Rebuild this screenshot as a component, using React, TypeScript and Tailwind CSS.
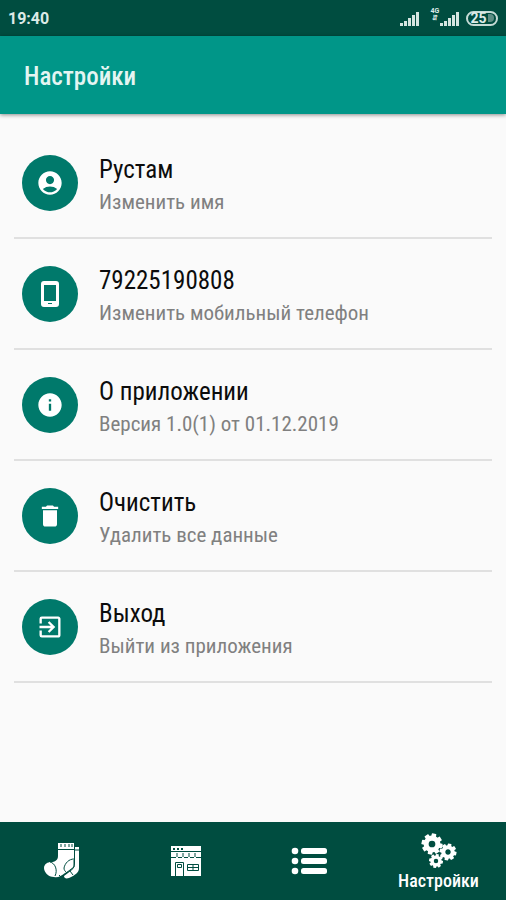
import type { ReactNode } from "react";
import { MdAccountCircle, MdDelete, MdExitToApp, MdInfo } from "react-icons/md";

const narrow = "font-['Roboto_Condensed','Open_Sans_Condensed','Roboto',sans-serif]";

function SignalBars() {
  return (
    <svg viewBox="0 0 20 15" className="h-[15px] w-5" fill="#d5e6e1" aria-hidden="true">
      <rect x="0" y="12" width="3" height="3" />
      <rect x="4" y="10" width="3" height="5" />
      <rect x="8" y="7" width="3" height="8" />
      <rect x="12" y="4" width="3" height="11" />
      <rect x="16" y="1" width="3" height="14" />
    </svg>
  );
}

function StatusBar() {
  return (
    <div className="flex h-9 items-center justify-between bg-[#004d40] px-2 text-[#dcebe7]">
      <time className="pt-0.5 font-['Roboto',sans-serif] text-base font-bold">19:40</time>
      <div className="flex items-center">
        <SignalBars />
        <div className="ml-2.5 flex h-5 w-2.5 flex-col items-center font-['Roboto',sans-serif] text-[7px] leading-[7px] font-bold">
          <span>4G</span>
          <span aria-hidden="true">⇵</span>
        </div>
        <SignalBars />
        <div className="ml-1.5 flex h-[15px] w-8 items-center justify-center rounded-full border-2 border-[#c5dbd5] font-['Roboto',sans-serif] text-sm leading-3 font-bold">
          <span>25</span>
          <span className="ml-px h-2 w-1.5 rounded-r-full bg-[#5c8d83]" />
        </div>
      </div>
    </div>
  );
}

function PhoneIcon() {
  return (
    <svg viewBox="0 0 28 28" className="size-7" aria-hidden="true">
      <path
        fill="currentColor"
        fillRule="evenodd"
        d="M8 1h12a3 3 0 0 1 3 3v20a3 3 0 0 1-3 3H8a3 3 0 0 1-3-3V4a3 3 0 0 1 3-3zM8 5v16h12V5zM12 23v1h4v-1z"
      />
    </svg>
  );
}

type Setting = { title: string; detail: string; icon: ReactNode };

const settings: Setting[] = [
  { title: "Рустам", detail: "Изменить имя", icon: <MdAccountCircle /> },
  { title: "79225190808", detail: "Изменить мобильный телефон", icon: <PhoneIcon /> },
  { title: "О приложении", detail: "Версия 1.0(1) от 01.12.2019", icon: <MdInfo /> },
  { title: "Очистить", detail: "Удалить все данные", icon: <MdDelete /> },
  { title: "Выход", detail: "Выйти из приложения", icon: <MdExitToApp /> },
];

function SettingRow({ title, detail, icon }: Setting) {
  return (
    <li className="border-b-2 border-[#e0e0e0]">
      <button type="button" className="flex h-[109px] w-full items-center gap-[21px] pl-2 text-left">
        <span className="flex size-14 shrink-0 items-center justify-center rounded-full bg-[#00796b] text-[28px] text-white">
          {icon}
        </span>
        <span className="flex flex-col pt-1.5">
          <span className="text-[25px] leading-8 text-[#0c0c0c]">{title}</span>
          <span className="text-[21px] leading-8 text-[#808080]">{detail}</span>
        </span>
      </button>
    </li>
  );
}

function SocksIcon() {
  return (
    <svg viewBox="0 0 36 36" className="size-9" fill="white" aria-hidden="true">
      <path d="M31 4h4v21c0 5-4 7-10 10-3 1-5 0-5-2l8-6c2-2 3-4 3-7z" />
      <path d="M14 0h16v6H14z" />
      <path d="M14 7h16v14c0 5-5 7-9 9-4 3-7 5-11 4-6 0-10-5-10-9 0-4 4-6 7-6 4 0 7-2 7-6z" />
      <g fill="none" stroke="#004d40" strokeWidth="1">
        <path d="M17 1v3M21 1v3M25 1v3M28 1v3" />
        <path d="M6 19c5 1 8 8 5 14" />
        <path d="M30 16c-5 0-9 4-10 9 0 2 1 3 2 4M30 17v7l-8 6" />
        <path d="M31 7h4M15 32l3 3M26 28l3 4" />
      </g>
    </svg>
  );
}

function ShopIcon() {
  return (
    <svg viewBox="0 0 32 32" className="size-8" aria-hidden="true">
      <path d="M1 1h30v30H1z" fill="white" />
      <g fill="none" stroke="#004d40" strokeWidth="1">
        <path d="M1 6.500h30" />
        <path d="M3 4h2M7 4h2M11 4h2" strokeWidth="2" />
        <path d="M1 12.500h5M8 12.500h4M14 12.500h4M20 12.500h4M26 12.500h5M7 8v4M13 8v4M19 8v4M25 8v4" />
        <path d="M5.500 31V17.500h8V31M7.500 19.500h4v3h-4zM17.500 19.500h11v6h-11zM23 19v6M17 22.500h12" />
      </g>
    </svg>
  );
}

function ListIcon() {
  return (
    <svg viewBox="0 0 36 30" className="h-[30px] w-9" fill="white" aria-hidden="true">
      {[2, 12, 22].map((y) => (
        <g key={y}>
          <circle cx="4" cy={y + 3} r="3.3" />
          <rect x="10" y={y} width="26" height="6" rx="2.500" />
        </g>
      ))}
    </svg>
  );
}

function Gear({ cx, cy, r, teeth }: { cx: number; cy: number; r: number; teeth: number }) {
  return (
    <g transform={`translate(${cx} ${cy})`}>
      {Array.from({ length: teeth }, (_, i) => (
        <rect
          key={i}
          x={-r * 0.22}
          y={-r}
          width={r * 0.44}
          height={r * 0.5}
          rx="0.6"
          fill="white"
          transform={`rotate(${(i * 360) / teeth + 12})`}
        />
      ))}
      <circle r={r * 0.56} fill="none" stroke="white" strokeWidth={r * 0.48} />
    </g>
  );
}

function GearsIcon() {
  return (
    <svg viewBox="0 0 36 36" className="size-9" aria-hidden="true">
      <Gear cx={11} cy={11} r={10.5} teeth={8} />
      <Gear cx={27} cy={19} r={8.5} teeth={8} />
      <Gear cx={15} cy={28} r={7} teeth={8} />
    </svg>
  );
}

export default function App() {
  return (
    <div className={`flex min-h-screen flex-col bg-[#fafafa] ${narrow}`}>
      <StatusBar />
      <header className="flex h-[78px] items-center bg-[#009688] px-6 pt-1 shadow-[0_1px_4px_rgba(0,0,0,0.45)]">
        <h1 className="text-[25px] leading-8 font-medium text-[#e4f5f2]">Настройки</h1>
      </header>
      <main className="grow px-[14px] pt-[14px]">
        <ul>
          {settings.map((s) => (
            <SettingRow key={s.title} {...s} />
          ))}
        </ul>
      </main>
      <nav className="flex h-[78px] bg-[#004d40]">
        <button type="button" aria-label="Носки" className="flex grow basis-0 items-center justify-center">
          <SocksIcon />
        </button>
        <button type="button" aria-label="Магазин" className="flex grow basis-0 items-center justify-center">
          <ShopIcon />
        </button>
        <button type="button" aria-label="Список" className="flex grow basis-0 items-center justify-center">
          <ListIcon />
        </button>
        <button
          type="button"
          aria-current="page"
          className="flex w-[135px] flex-col items-center justify-center pt-1 text-white"
        >
          <GearsIcon />
          <span className="text-lg leading-6 font-medium">Настройки</span>
        </button>
      </nav>
    </div>
  );
}
